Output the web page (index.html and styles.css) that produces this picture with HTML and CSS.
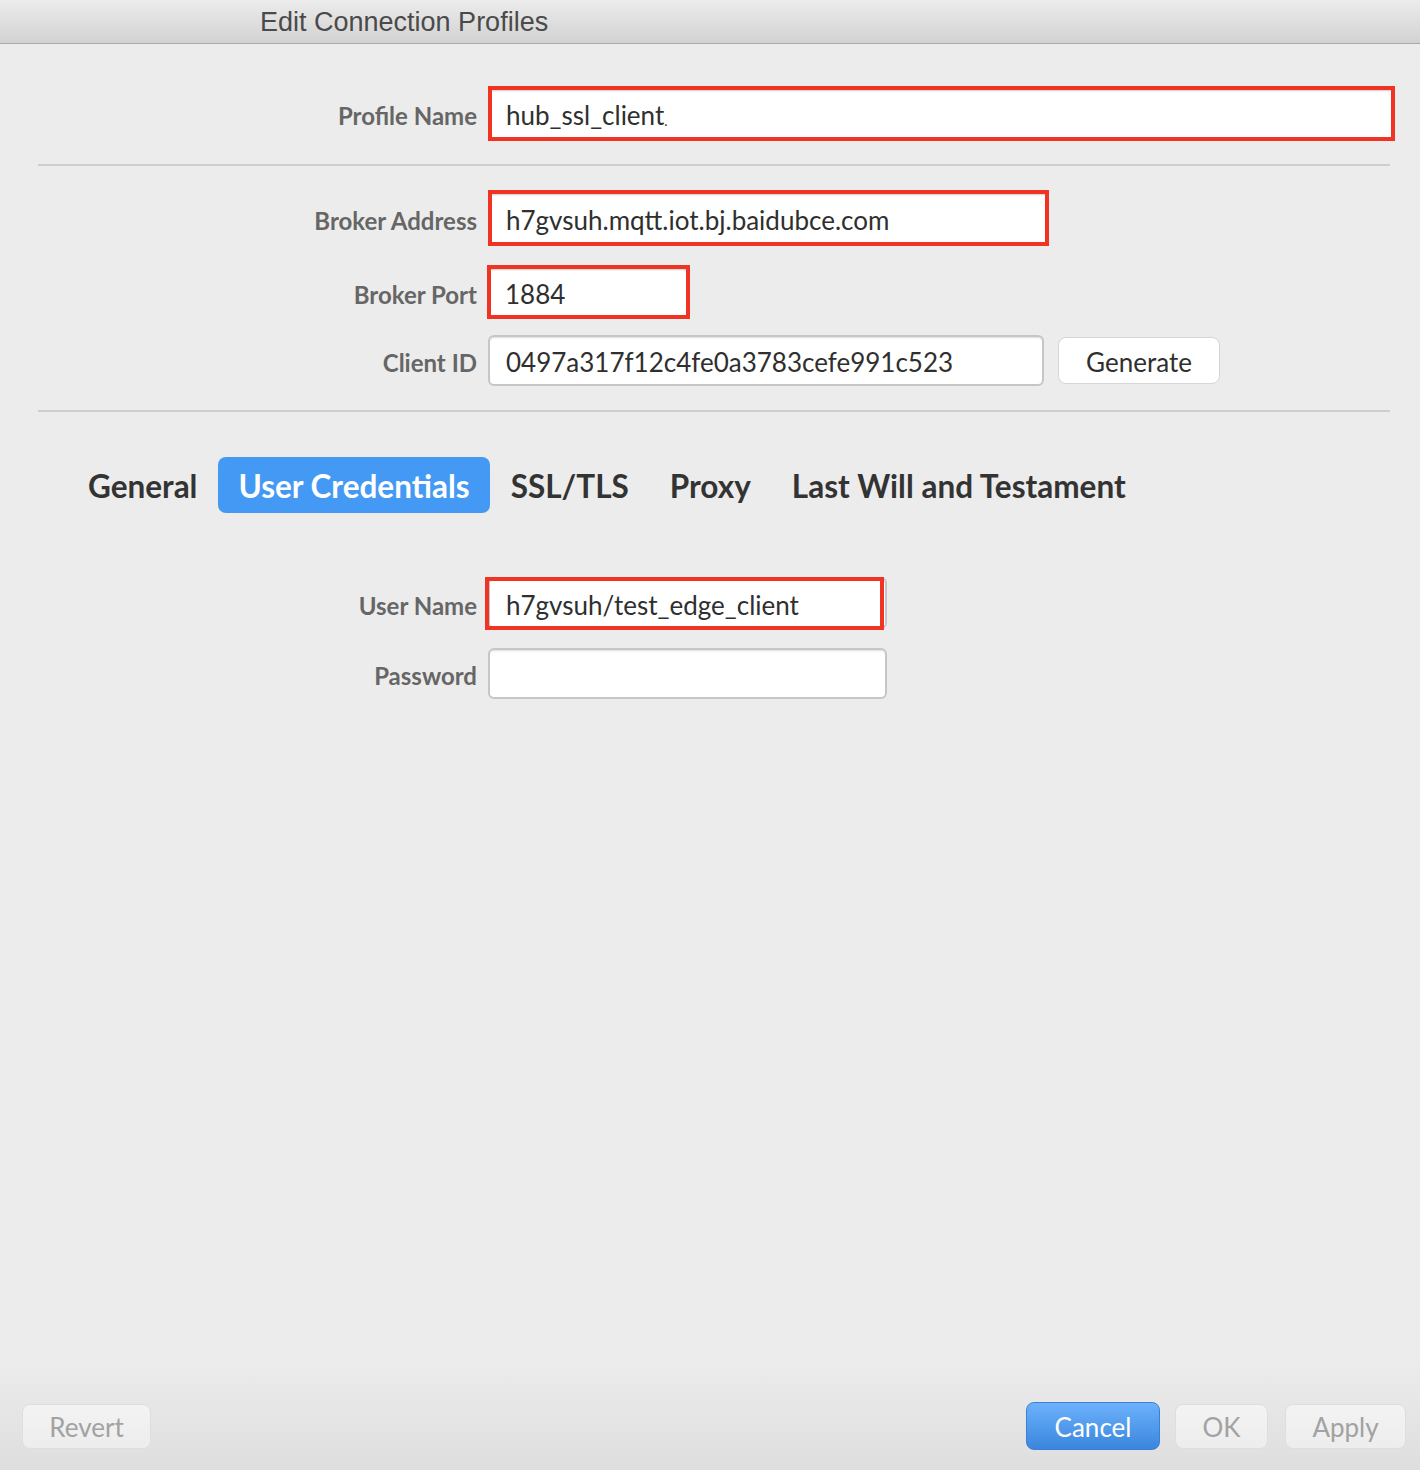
FILE: index.html
```html
<!DOCTYPE html>
<html>
<head>
<meta charset="utf-8">
<link rel="stylesheet" href="styles.css">
</head>
<body>
<div class="window">
  <header class="titlebar"><span class="title">Edit Connection Profiles</span></header>
  <main class="content">
    <div class="row row-profile">
      <label class="label">Profile Name</label>
      <div class="field hl profile">hub_ssl_client<span class="caret">.</span></div>
    </div>
    <div class="sep sep-1"></div>
    <div class="row row-address">
      <label class="label">Broker Address</label>
      <div class="field hl address">h7gvsuh.mqtt.iot.bj.baidubce.com</div>
    </div>
    <div class="row row-port">
      <label class="label">Broker Port</label>
      <div class="field hl port">1884</div>
    </div>
    <div class="row row-client">
      <label class="label">Client ID</label>
      <div class="field plain client">0497a317f12c4fe0a3783cefe991c523</div>
      <button class="btn-generate">Generate</button>
    </div>
    <div class="sep sep-2"></div>
    <nav class="tabs">
      <span class="tab">General</span>
      <span class="tab active">User Credentials</span>
      <span class="tab">SSL/TLS</span>
      <span class="tab">Proxy</span>
      <span class="tab">Last Will and Testament</span>
    </nav>
    <div class="row row-user">
      <label class="label">User Name</label>
      <div class="field plain user">h7gvsuh/test_edge_client<span class="hl-overlay"></span></div>
    </div>
    <div class="row row-pass">
      <label class="label">Password</label>
      <div class="field plain pass"></div>
    </div>
  </main>
  <footer class="footer">
    <button class="btn disabled revert">Revert</button>
    <div class="spacer"></div>
    <button class="btn primary cancel">Cancel</button>
    <button class="btn disabled ok">OK</button>
    <button class="btn disabled apply">Apply</button>
  </footer>
</div>
</body>
</html>
```

FILE: styles.css
```css
* { box-sizing: border-box; }
html, body { margin: 0; padding: 0; }
body {
  background: #ececec;
  font-family: Lato, "Open Sans", sans-serif;
  color: #333;
}
.window {
  width: 1420px;
  height: 1470px;
  display: flex;
  flex-direction: column;
}
.titlebar {
  height: 44px;
  background: linear-gradient(#ececec, #d2d2d2);
  border-bottom: 1px solid #a9a9a9;
  padding-left: 260px;
  display: flex;
  align-items: center;
}
.title {
  font-family: "Liberation Sans", Arial, sans-serif;
  font-size: 27px;
  color: #4a4a4a;
  padding-top: 1px;
}
.content {
  display: flex;
  flex-direction: column;
}
.row {
  display: flex;
  align-items: center;
}
.label {
  width: 477px;
  text-align: right;
  font-weight: 700;
  font-size: 24px;
  color: #666;
  padding-top: 4px;
}
.field {
  margin-left: 11px;
  background: #fff;
  font-size: 26px;
  color: #2f2f2f;
  display: flex;
  align-items: center;
  white-space: nowrap;
  padding-top: 3px;
}
.field.hl {
  border: 4px solid #f03322;
  padding-left: 14px;
  box-shadow: inset 0 3px 2px -2px #ccc;
}
.field.plain {
  border: 2px solid #c6c6c6;
  border-radius: 6px;
  padding-left: 16px;
  box-shadow: inset 0 2px 2px -1px #ddd;
}
.caret { font-size: 14px; margin-top: 10px; }

.row-profile { margin-top: 42px; }
.profile { width: 907px; height: 55px; }

.sep {
  height: 2px;
  background: #cfcfcf;
  margin-left: 38px;
  width: 1352px;
}
.sep-1 { margin-top: 23px; }
.row-address { margin-top: 24px; }
.address { width: 561px; height: 56px; }
.row-port { margin-top: 19px; }
.port { width: 203px; height: 54px; margin-left: 10px; }
.row-client { margin-top: 16px; }
.client { width: 556px; height: 51px; }
.btn-generate {
  margin-left: 14px;
  width: 162px;
  height: 47px;
  background: #fff;
  border: 1px solid #d6d6d6;
  border-radius: 8px;
  font-family: Lato, sans-serif;
  font-size: 26px;
  color: #2f2f2f;
  padding: 2px 0 0;
}
.sep-2 { margin-top: 24px; }

.tabs {
  display: flex;
  margin-top: 45px;
  margin-left: 68px;
  height: 56px;
  align-items: stretch;
}
.tab {
  font-weight: 700;
  font-size: 31.5px;
  color: #333;
  padding: 2px 20px 0;
  display: flex;
  align-items: center;
  border-radius: 8px;
  margin-right: 1px;
}
.tab.active {
  background: #4399f4;
  color: #fff;
}

.row-user { margin-top: 64px; }
.user {
  width: 399px;
  height: 52px;
  position: relative;
}
.hl-overlay {
  position: absolute;
  left: -5px;
  top: -2px;
  width: 399px;
  height: 53px;
  border: 4px solid #f03322;
}
.row-pass { margin-top: 19px; }
.pass { width: 399px; height: 51px; }

.footer {
  margin-top: auto;
  height: 110px;
  background: linear-gradient(#ececec, #dedede);
  display: flex;
  align-items: center;
  padding: 38px 14px 16px 22px;
}
.spacer { flex: 1; }
.btn {
  font-family: Lato, sans-serif;
  font-size: 26px;
  border-radius: 8px;
  padding: 2px 0 0;
  height: 45px;
}
.btn.disabled {
  background: linear-gradient(#f3f3f3, #ededed);
  border: 1px solid #dedede;
  color: #a2a2a2;
}
.btn.primary {
  background: linear-gradient(#6cb1fb, #3a86de);
  border: 1px solid #3a80d6;
  color: #fff;
  height: 48px;
}
.revert { width: 129px; }
.cancel { width: 134px; }
.ok { width: 93px; margin-left: 15px; }
.apply { width: 121px; margin-left: 17px; }
```
